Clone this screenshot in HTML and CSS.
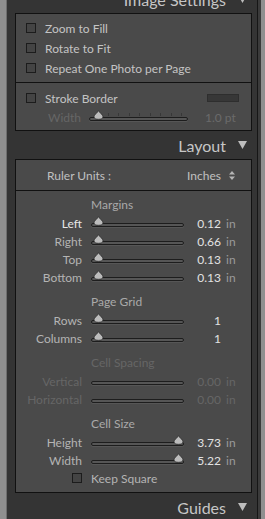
FILE: index.html
```html
<!DOCTYPE html>
<html lang="en">
  <head>
    <meta charset="UTF-8" />
    <title>Print Panels</title>
    <link rel="stylesheet" href="styles.css">
  </head>
  <body>
    <div class="edge-left"></div>

    <div class="column">
      <div class="header header-top">
        <span>Image Settings</span>
        <svg class="tri" width="9" height="8" viewBox="0 0 9 8"><polygon points="0,0 9,0 4.5,8" /></svg>
      </div>

      <div class="panel">
        <div class="section image-opts">
          <div class="check-row"><span class="box"></span><span>Zoom to Fill</span></div>
          <div class="check-row"><span class="box"></span><span>Rotate to Fit</span></div>
          <div class="check-row"><span class="box"></span><span>Repeat One Photo per Page</span></div>
        </div>
        <div class="section stroke">
          <div class="check-row">
            <span class="box"></span><span>Stroke Border</span>
            <span class="swatch"></span>
          </div>
          <div class="width-row dim">
            <span class="wlabel">Width</span>
            <div class="slider wide">
              <div class="ticks">
                <i></i><i></i><i></i><i></i><i></i><i></i><i></i><i></i><i></i>
              </div>
              <svg class="thumb" width="11" height="10" viewBox="0 0 11 10"><path d="M5.5 0.6 C6.6 3 10 4.6 10 6.8 C10 8.6 8.2 9.3 5.5 9.3 C2.8 9.3 1 8.6 1 6.8 C1 4.6 4.4 3 5.5 0.6Z" /></svg>
            </div>
            <span class="wvalue">1.0 pt</span>
          </div>
        </div>
      </div>

      <div class="header">
        <span>Layout</span>
        <svg class="tri" width="9" height="8" viewBox="0 0 9 8"><polygon points="0,0 9,0 4.5,8" /></svg>
      </div>

      <div class="panel">
        <div class="section ruler">
          <span>Ruler Units :</span>
          <span class="units">Inches
            <svg width="6" height="9" viewBox="0 0 6 9"><polygon points="3,0 6,3.5 0,3.5" /><polygon points="0,5.5 6,5.5 3,9" /></svg>
          </span>
        </div>

        <div class="section layout-opts">
          <div class="group-title">Margins</div>
          <div class="row">
            <span class="label active">Left</span>
            <div class="slider"><svg class="thumb" width="11" height="10" viewBox="0 0 11 10"><path d="M5.5 0.6 C6.6 3 10 4.6 10 6.8 C10 8.6 8.2 9.3 5.5 9.3 C2.8 9.3 1 8.6 1 6.8 C1 4.6 4.4 3 5.5 0.6Z" /></svg></div>
            <span class="value">0.12</span><span class="unit">in</span>
          </div>
          <div class="row">
            <span class="label">Right</span>
            <div class="slider"><svg class="thumb" width="11" height="10" viewBox="0 0 11 10"><path d="M5.5 0.6 C6.6 3 10 4.6 10 6.8 C10 8.6 8.2 9.3 5.5 9.3 C2.8 9.3 1 8.6 1 6.8 C1 4.6 4.4 3 5.5 0.6Z" /></svg></div>
            <span class="value">0.66</span><span class="unit">in</span>
          </div>
          <div class="row">
            <span class="label">Top</span>
            <div class="slider"><svg class="thumb" width="11" height="10" viewBox="0 0 11 10"><path d="M5.5 0.6 C6.6 3 10 4.6 10 6.8 C10 8.6 8.2 9.3 5.5 9.3 C2.8 9.3 1 8.6 1 6.8 C1 4.6 4.4 3 5.5 0.6Z" /></svg></div>
            <span class="value">0.13</span><span class="unit">in</span>
          </div>
          <div class="row">
            <span class="label">Bottom</span>
            <div class="slider"><svg class="thumb" width="11" height="10" viewBox="0 0 11 10"><path d="M5.5 0.6 C6.6 3 10 4.6 10 6.8 C10 8.6 8.2 9.3 5.5 9.3 C2.8 9.3 1 8.6 1 6.8 C1 4.6 4.4 3 5.5 0.6Z" /></svg></div>
            <span class="value">0.13</span><span class="unit">in</span>
          </div>

          <div class="group-title">Page Grid</div>
          <div class="row">
            <span class="label">Rows</span>
            <div class="slider"><svg class="thumb" width="11" height="10" viewBox="0 0 11 10"><path d="M5.5 0.6 C6.6 3 10 4.6 10 6.8 C10 8.6 8.2 9.3 5.5 9.3 C2.8 9.3 1 8.6 1 6.8 C1 4.6 4.4 3 5.5 0.6Z" /></svg></div>
            <span class="value">1</span><span class="unit"></span>
          </div>
          <div class="row">
            <span class="label">Columns</span>
            <div class="slider"><svg class="thumb" width="11" height="10" viewBox="0 0 11 10"><path d="M5.5 0.6 C6.6 3 10 4.6 10 6.8 C10 8.6 8.2 9.3 5.5 9.3 C2.8 9.3 1 8.6 1 6.8 C1 4.6 4.4 3 5.5 0.6Z" /></svg></div>
            <span class="value">1</span><span class="unit"></span>
          </div>

          <div class="group-title dim">Cell Spacing</div>
          <div class="row dim">
            <span class="label">Vertical</span>
            <div class="slider"></div>
            <span class="value">0.00</span><span class="unit">in</span>
          </div>
          <div class="row dim">
            <span class="label">Horizontal</span>
            <div class="slider"></div>
            <span class="value">0.00</span><span class="unit">in</span>
          </div>

          <div class="group-title">Cell Size</div>
          <div class="row">
            <span class="label">Height</span>
            <div class="slider"><svg class="thumb end" width="11" height="10" viewBox="0 0 11 10"><path d="M5.5 0.6 C6.6 3 10 4.6 10 6.8 C10 8.6 8.2 9.3 5.5 9.3 C2.8 9.3 1 8.6 1 6.8 C1 4.6 4.4 3 5.5 0.6Z" /></svg></div>
            <span class="value">3.73</span><span class="unit">in</span>
          </div>
          <div class="row">
            <span class="label">Width</span>
            <div class="slider"><svg class="thumb end" width="11" height="10" viewBox="0 0 11 10"><path d="M5.5 0.6 C6.6 3 10 4.6 10 6.8 C10 8.6 8.2 9.3 5.5 9.3 C2.8 9.3 1 8.6 1 6.8 C1 4.6 4.4 3 5.5 0.6Z" /></svg></div>
            <span class="value">5.22</span><span class="unit">in</span>
          </div>
          <div class="keep-row">
            <span class="box"></span><span>Keep Square</span>
          </div>
        </div>
      </div>

      <div class="header">
        <span>Guides</span>
        <svg class="tri" width="9" height="8" viewBox="0 0 9 8"><polygon points="0,0 9,0 4.5,8" /></svg>
      </div>
    </div>

    <div class="scroll"></div>
    <div class="edge-right"></div>
  </body>
</html>
```

FILE: styles.css
```css
* {
  padding: 0;
  margin: 0;
  box-sizing: border-box;
}
html,
body {
  height: 100%;
  overflow: hidden;
}
body {
  display: flex;
  background: #343434;
  font-family: Lato, "Open Sans", sans-serif;
  font-size: 12px;
  color: #c4c4c4;
}
.edge-left {
  width: 7px;
  flex: none;
  background: #8f8f8f;
  border-right: 1px solid #6e6e6e;
}
.column {
  width: 250px;
  flex: none;
  padding: 0 5px 0 8px;
}
.scroll {
  width: 4px;
  flex: none;
  background: #3b3b3b;
  border-left: 1px solid #161616;
}
.edge-right {
  flex: 1;
  background: #8f8f8f;
}

/* panel headers */
.header {
  height: 28px;
  display: flex;
  align-items: center;
  justify-content: flex-end;
  gap: 12px;
  padding-right: 5px;
  font-size: 16px;
  color: #c6c6c6;
}
.header-top {
  margin-top: -15px;
}
.tri polygon {
  fill: #bdbdbd;
}

.panel {
  background: #4a4a4a;
  border: 1px solid #111;
}
.section + .section {
  border-top: 1px solid #111;
}

/* checkbox rows */
.image-opts {
  padding: 4px 0 4px 10px;
}
.stroke {
  padding: 5px 0 4px 10px;
}
.check-row {
  height: 20px;
  display: flex;
  align-items: center;
  gap: 9px;
}
.box {
  width: 10px;
  height: 10px;
  border: 1px solid #1c1c1c;
  background: #444;
}
.swatch {
  margin-left: auto;
  margin-right: 12px;
  width: 32px;
  height: 8px;
  background: #373737;
  border: 1px solid #2e2e2e;
}
.width-row {
  height: 18px;
  display: flex;
  align-items: center;
}
.wlabel {
  width: 63px;
  padding-left: 22px;
}
.wvalue {
  margin-left: 17px;
}

/* sliders */
.slider {
  position: relative;
  width: 93px;
  height: 4px;
  margin-top: 3px;
  border: 1px solid #1d1d1d;
  border-radius: 3px;
  background: #565656;
  box-shadow: 0 1px 0 rgba(255, 255, 255, 0.07);
}
.slider.wide {
  width: 99px;
}
.slider.wide .thumb {
  left: 3px;
}
.thumb {
  position: absolute;
  top: -8px;
  left: 1px;
}
.thumb.end {
  left: 81px;
}
.thumb path {
  fill: #bcbcbc;
  stroke: #2a2a2a;
  stroke-width: 0.8;
}
.ticks {
  position: absolute;
  left: 7px;
  right: 5px;
  top: -5px;
  display: flex;
  justify-content: space-between;
}
.ticks i {
  width: 1px;
  height: 3px;
  background: #383838;
}

/* layout panel */
.ruler {
  height: 30px;
  display: flex;
  align-items: center;
  justify-content: space-between;
  padding: 0 16px 0 31px;
  color: #c0c0c0;
}
.units {
  display: flex;
  align-items: center;
  gap: 8px;
}
.units polygon {
  fill: #b5b5b5;
}
.layout-opts {
  padding: 5px 0 5px;
}
.group-title {
  height: 18px;
  line-height: 18px;
  padding-left: 75px;
  color: #a9a9a9;
}
.row + .group-title {
  margin-top: 7px;
}
.row {
  height: 18px;
  display: flex;
  align-items: center;
}
.label {
  width: 66px;
  text-align: right;
  margin-right: 9px;
  color: #b4b4b4;
}
.label.active {
  color: #e6e6e6;
}
.value {
  width: 37px;
  text-align: right;
  color: #e2e2e2;
}
.unit {
  margin-left: 5px;
  color: #9a9a9a;
}
.keep-row {
  height: 18px;
  display: flex;
  align-items: center;
  gap: 9px;
  padding-left: 56px;
  color: #b4b4b4;
}
.dim,
.dim .label,
.dim .value,
.dim .unit,
.group-title.dim {
  color: #666;
}
.wvalue {
  color: #6a6a6a;
}
```
